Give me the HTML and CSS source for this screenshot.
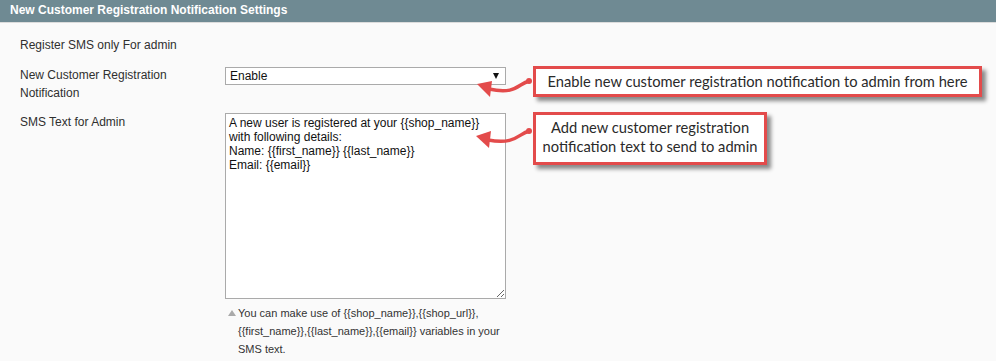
FILE: index.html
```html
<!DOCTYPE html>
<html lang="en">
<head>
    <meta charset="UTF-8">
    <title>New Customer Registration Notification Settings</title>
    <link rel="stylesheet" href="styles.css">
</head>
<body>
    <div class="section-head">New Customer Registration Notification Settings</div>
    <div class="section-body">
        <div class="form-row">
            <label class="form-label">Register SMS only For admin</label>
        </div>
        <div class="form-row">
            <label class="form-label" for="notify">New Customer Registration Notification</label>
            <div class="select-wrap">
                <select id="notify">
                    <option>Enable</option>
                    <option>Disable</option>
                </select>
            </div>
        </div>
        <div class="form-row">
            <label class="form-label" for="smstext">SMS Text for Admin</label>
            <div class="field">
                <textarea id="smstext">A new user is registered at your {{shop_name}} with following details:
Name: {{first_name}} {{last_name}}
Email: {{email}}</textarea>
                <p class="hint">You can make use of {{shop_name}},{{shop_url}}, {{first_name}},{{last_name}},{{email}} variables in your SMS text.</p>
            </div>
        </div>
    </div>

    <!-- callouts -->
    <div class="callout callout-1">Enable new customer registration notification to admin from here</div>
    <div class="callout callout-2">Add new customer registration notification text to send to admin</div>
    <svg class="arrows" width="996" height="361" viewBox="0 0 996 361">
        <g fill="none" stroke="#e34b4b" stroke-width="3.5" stroke-linecap="round">
            <path d="M529,81 C518,84 516,95 489,89"/>
            <path d="M529,131 C518,134 516,145 488,140"/>
        </g>
        <g fill="#e34b4b">
            <circle cx="529" cy="81" r="3"/>
            <circle cx="529" cy="131" r="3"/>
            <polygon points="477,84 492,81 490,97"/>
            <polygon points="476,136 491,131 489,148"/>
        </g>
    </svg>
</body>
</html>
```
FILE: styles.css
```css
body {
    margin: 0;
    background: #fafafa;
    font-family: "Liberation Sans", Arial, sans-serif;
    font-size: 12px;
    color: #2f2f2f;
    position: relative;
    height: 361px;
    overflow: hidden;
}
.section-head {
    height: 22px;
    line-height: 21px;
    background: #6f8a93;
    color: #fff;
    font-weight: bold;
    padding-left: 10px;
    border-bottom: 1px solid #dcdcdc;
}
.section-body {
    padding: 13px 20px 0;
}
.form-row {
    display: grid;
    grid-template-columns: 205px 281px;
    margin-bottom: 12px;
}
.form-row:nth-child(2) {
    margin-bottom: 11px;
}
.form-label {
    line-height: 18px;
    padding-right: 10px;
}
.select-wrap {
    position: relative;
    margin-top: 1px;
    height: 18px;
}
.select-wrap select {
    appearance: none;
    -webkit-appearance: none;
    width: 100%;
    height: 18px;
    margin: 0;
    border: 1px solid #aaa;
    border-radius: 0;
    background: #fff;
    font-family: inherit;
    font-size: 12px;
    color: #111;
    padding: 0 0 0 4px;
    line-height: 16px;
}
.select-wrap::after {
    content: "";
    position: absolute;
    right: 7px;
    top: 6px;
    border-left: 3.5px solid transparent;
    border-right: 3.5px solid transparent;
    border-top: 6px solid #111;
    pointer-events: none;
}
.field textarea {
    display: block;
    box-sizing: border-box;
    width: 281px;
    height: 186px;
    margin: 0;
    border: 1px solid #aaa;
    background: #fff;
    font-family: inherit;
    font-size: 12px;
    line-height: 14px;
    color: #111;
    padding: 2px 3px;
}
.hint {
    margin: 5px 0 0;
    padding-left: 13px;
    position: relative;
    font-size: 11px;
    line-height: 18px;
    color: #333;
    width: 265px;
}
.hint::before {
    content: "";
    position: absolute;
    left: 3px;
    top: 6px;
    border-left: 4px solid transparent;
    border-right: 4px solid transparent;
    border-bottom: 6px solid #aaa;
}
/* annotation boxes drawn over the screenshot */
.callout {
    position: absolute;
    box-sizing: border-box;
    background: #fff;
    border: 3px solid #e34b4b;
    box-shadow: 4px 4px 4px rgba(0, 0, 0, 0.45);
    font-family: Lato, "Open Sans", sans-serif;
    font-size: 14.7px;
    color: #2a2a2a;
    text-align: center;
}
.callout-1 {
    left: 533px;
    top: 66px;
    width: 449px;
    height: 31px;
    line-height: 25px;
}
.callout-2 {
    left: 533px;
    top: 112px;
    width: 234px;
    height: 53px;
    line-height: 19px;
    padding: 3px 0 0;
}
.arrows {
    position: absolute;
    left: 0;
    top: 0;
    pointer-events: none;
}
```
